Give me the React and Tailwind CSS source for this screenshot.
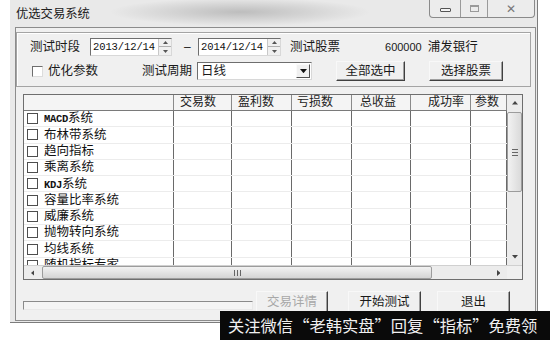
import React from "react";

const rows = [
  { latin: "MACD", cjk: "系统" },
  { cjk: "布林带系统" },
  { cjk: "趋向指标" },
  { cjk: "乘离系统" },
  { latin: "KDJ", cjk: "系统" },
  { cjk: "容量比率系统" },
  { cjk: "威廉系统" },
  { cjk: "抛物转向系统" },
  { cjk: "均线系统" },
  { cjk: "随机指标专家" },
];

const cols = [
  { w: "w-[58px]", pl: "pl-[6px]", label: "交易数" },
  { w: "w-[60px]", pl: "pl-[6px]", label: "盈利数" },
  { w: "w-[60px]", pl: "pl-[5px]", label: "亏损数" },
  { w: "w-[59px]", pl: "pl-[8px]", label: "总收益" },
  { w: "w-[60px]", pl: "pl-[17px]", label: "成功率" },
  { w: "w-[36px]", pl: "pl-[4px]", label: "参数" },
];

function Tri({ dir, size = 5, color = "#333" }) {
  const s = size;
  let pts;
  if (dir === "up") pts = `0,${s * 0.6} ${s / 2},0 ${s},${s * 0.6}`;
  else if (dir === "down") pts = `0,0 ${s / 2},${s * 0.6} ${s},0`;
  else if (dir === "left") pts = `${s * 0.6},0 0,${s / 2} ${s * 0.6},${s}`;
  else pts = `0,0 ${s * 0.6},${s / 2} 0,${s}`;
  const w = dir === "up" || dir === "down" ? s : s * 0.6;
  const h = dir === "up" || dir === "down" ? s * 0.6 : s;
  return (
    <svg width={w} height={h} viewBox={`0 0 ${w} ${h}`}>
      <polygon points={pts} fill={color} />
    </svg>
  );
}

function Btn({ children, className = "", disabled }) {
  return (
    <div
      className={`flex items-center justify-center bg-[#f0f0f0] border border-t-[#f8f8f8] border-l-[#f8f8f8] border-r-[#404040] border-b-[#404040] shadow-[inset_-1px_-1px_0_#a0a0a0] text-[12.5px] leading-none ${
        disabled ? "text-[#a8a8a8]" : "text-[#1a1a1a]"
      } ${className}`}
    >
      {children}
    </div>
  );
}

function DateBox({ value, w }) {
  return (
    <div
      className={`${w} h-[18px] flex items-center bg-white border border-t-[#6e6e6e] border-l-[#6e6e6e] border-r-[#d8d8d8] border-b-[#d8d8d8]`}
    >
      <span className="pl-[2px] font-['Liberation_Mono',monospace] text-[10.5px] text-[#111] leading-none tracking-[-0.1px]">
        {value}
      </span>
      <div className="ml-auto w-[13px] h-full flex flex-col bg-[#f0f0f0] border-l border-[#c8c8c8]">
        <div className="h-1/2 flex items-center justify-center border-b border-[#b0b0b0]">
          <Tri dir="up" size={5} color="#555" />
        </div>
        <div className="h-1/2 flex items-center justify-center">
          <Tri dir="down" size={5} color="#555" />
        </div>
      </div>
    </div>
  );
}

export default function App() {
  return (
    <div className="relative w-[550px] h-[340px] overflow-hidden bg-white font-['Liberation_Sans','Noto_Sans_CJK_SC',sans-serif] text-[#1a1a1a]">
      {/* window */}
      <div className="ml-[10px] w-[528px] h-[323px] flex flex-col pl-[5px] border-r border-b border-[#7c7c7c] bg-[radial-gradient(ellipse_130px_14px_at_230px_12px,#bdbdbd_0%,#e9e9e9_100%)]">
        {/* title bar */}
        <div className="h-[27px] flex items-start justify-between">
          <div className="pl-[1px] pt-[6px] text-[12.3px] leading-[16px] text-[#202020]">优选交易系统</div>
          <div className="mr-[2px] flex h-[18px] border border-t-0 border-[#8a8a8a] rounded-b-[4px] overflow-hidden bg-[#ececec]">
            <div className="w-[31px] flex items-center justify-center border-r border-[#9a9a9a]">
              <div className="w-[11px] h-[4px] border border-[#555] rounded-[1px] bg-[#f4f4f4] mt-[2px]" />
            </div>
            <div className="w-[27px] flex items-center justify-center border-r border-[#9a9a9a]">
              <div className="w-[9px] h-[7px] border border-[#9a9a9a] border-t-2" />
            </div>
            <div className="w-[46px] flex items-center justify-center text-[12px] text-[#777] leading-none">
              ✕
            </div>
          </div>
        </div>

        {/* client area */}
        <div className="w-[521px] h-[294px] border border-[#8c8c8c] bg-[#f0f0f0] flex flex-col">
          {/* group box */}
          <div className="mt-[4px] w-[515px] h-[55px] border border-[#a4a4a4] shadow-[inset_1px_1px_0_#ffffff] flex flex-col">
            <div className="mt-[5px] h-[18px] flex items-center">
              <span className="ml-[13px] w-[50px] text-[12.5px] leading-none">测试时段</span>
              <div className="ml-[10px]">
                <DateBox value="2013/12/14" w="w-[82px]" />
              </div>
              <span className="ml-[12px] w-[8px] text-[12px] leading-none">–</span>
              <div className="ml-[6px]">
                <DateBox value="2014/12/14" w="w-[83px]" />
              </div>
              <span className="ml-[9px] text-[12.5px] leading-none">测试股票</span>
              <span className="ml-[45px] text-[11px] leading-none">600000</span>
              <span className="ml-[6px] text-[12.5px] leading-none">浦发银行</span>
            </div>
            <div className="mt-[5px] h-[20px] flex items-center">
              <div className="ml-[15px] w-[11px] h-[11px] bg-white border border-t-[#6e6e6e] border-l-[#6e6e6e] border-r-[#dcdcdc] border-b-[#dcdcdc]" />
              <span className="ml-[5px] w-[50px] text-[12.5px] leading-none">优化参数</span>
              <span className="ml-[44px] w-[50px] text-[12.5px] leading-none">测试周期</span>
              <div className="ml-[5px] w-[115px] h-[18px] flex items-center bg-white border border-t-[#6e6e6e] border-l-[#6e6e6e] border-r-[#d8d8d8] border-b-[#d8d8d8]">
                <span className="pl-[3px] text-[12.5px] leading-none">日线</span>
                <div className="ml-auto mr-[1px] w-[14px] h-[14px] flex items-center justify-center bg-[#f0f0f0] border border-t-[#fafafa] border-l-[#fafafa] border-r-[#505050] border-b-[#505050]">
                  <Tri dir="down" size={7} color="#111" />
                </div>
              </div>
              <Btn className="ml-[24px] w-[69px] h-[20px]">全部选中</Btn>
              <Btn className="ml-[24px] w-[74px] h-[20px]">选择股票</Btn>
            </div>
          </div>

          {/* list */}
          <div className="ml-[7px] mt-[7px] w-[500px] h-[186px] border border-[#6e6e6e] bg-white flex flex-col">
            <div className="flex h-[170px]">
              <div className="w-[483px] flex flex-col">
                {/* header */}
                <div className="h-[16px] flex bg-[#f4f4f4] border-b border-[#7a7a7a]">
                  <div className="w-[150px] border-r border-[#8a8a8a]" />
                  {cols.map((c) => (
                    <div
                      key={c.label}
                      className={`${c.w} ${c.pl} border-r border-[#8a8a8a] text-[12px] leading-[15px] text-[#222]`}
                    >
                      {c.label}
                    </div>
                  ))}
                </div>
                {/* body rows */}
                <div className="h-[154px] overflow-hidden flex flex-col">
                  {rows.map((r, i) => (
                    <div key={i} className="h-[16.3px] shrink-0 flex border-b border-[#ececec]">
                      <div className="w-[150px] border-r border-[#6a6a6a] flex items-center">
                        <div className="ml-[3px] w-[11px] h-[11px] border border-[#4e4e4e] bg-white" />
                        <span className="ml-[6px] text-[12.5px] leading-none text-[#111] whitespace-nowrap">
                          {r.latin && (
                            <span className="font-['Liberation_Mono',monospace] font-bold text-[10.5px] tracking-[-0.3px]">
                              {r.latin}
                            </span>
                          )}
                          {r.cjk}
                        </span>
                      </div>
                      {cols.map((c) => (
                        <div key={c.label} className={`${c.w} border-r border-[#6a6a6a]`} />
                      ))}
                    </div>
                  ))}
                </div>
              </div>
              {/* vertical scrollbar */}
              <div className="w-[15px] flex flex-col bg-[#ececec]">
                <div className="h-[16px] flex items-center justify-center">
                  <Tri dir="up" size={6} color="#444" />
                </div>
                <div className="mt-[1px] h-[80px] rounded-[2px] border border-[#9c9c9c] bg-[linear-gradient(to_right,#f2f2f2,#dadada)] flex items-center justify-center">
                  <div className="flex flex-col gap-[2px]">
                    <div className="w-[6px] h-[1px] bg-[#666]" />
                    <div className="w-[6px] h-[1px] bg-[#666]" />
                    <div className="w-[6px] h-[1px] bg-[#666]" />
                  </div>
                </div>
                <div className="flex-1" />
                <div className="h-[16px] flex items-center justify-center">
                  <Tri dir="down" size={6} color="#444" />
                </div>
              </div>
            </div>
            {/* horizontal scrollbar */}
            <div className="h-[14px] flex bg-[#ececec] border-t border-[#d0d0d0]">
              <div className="w-[17px] flex items-center justify-center">
                <Tri dir="left" size={6} color="#444" />
              </div>
              <div className="ml-[1px] w-[390px] h-full rounded-[2px] border border-[#9c9c9c] bg-[linear-gradient(to_bottom,#f2f2f2,#d4d4d4)] flex items-center justify-center">
                <div className="flex gap-[2px]">
                  <div className="w-[1px] h-[6px] bg-[#666]" />
                  <div className="w-[1px] h-[6px] bg-[#666]" />
                  <div className="w-[1px] h-[6px] bg-[#666]" />
                </div>
              </div>
              <div className="flex-1" />
              <div className="w-[17px] flex items-center justify-center">
                <Tri dir="right" size={6} color="#444" />
              </div>
              <div className="w-[15px] bg-[#f0f0f0]" />
            </div>
          </div>

          {/* bottom row */}
          <div className="ml-[7px] mt-[11px] h-[22px] flex items-start">
            <div className="mt-[10px] w-[230px] h-[9px] border border-t-[#8a8a8a] border-l-[#8a8a8a] border-r-[#e8e8e8] border-b-[#e8e8e8] bg-[#f4f4f4]" />
            <Btn disabled className="ml-[3px] w-[72px] h-[22px]">交易详情</Btn>
            <Btn className="ml-[20px] w-[73px] h-[22px]">开始测试</Btn>
            <Btn className="ml-[16px] w-[73px] h-[22px]">退出</Btn>
          </div>
        </div>
      </div>

      {/* watermark banner overlay */}
      <div className="absolute left-[220px] top-[311px] w-[330px] h-[29px] bg-[#0a0a0a] flex items-center pl-[8px] overflow-hidden">
        <span className="text-[16.3px] leading-none text-[#f0f0f0] whitespace-nowrap font-['Noto_Sans_CJK_SC',sans-serif]">
          关注微信“老韩实盘”回复“指标”免费领
        </span>
      </div>
    </div>
  );
}
